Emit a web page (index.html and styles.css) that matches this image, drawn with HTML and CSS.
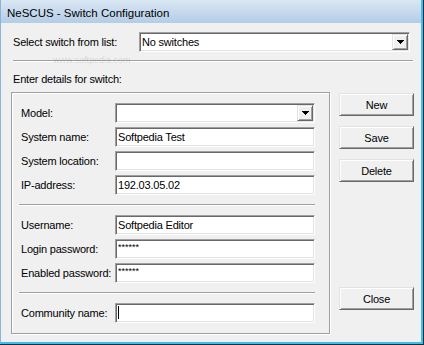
FILE: index.html
```html
<!DOCTYPE html>
<html lang="en">
<head>
    <meta charset="UTF-8">
    <meta name="viewport" content="width=device-width, initial-scale=1.0">
    <title>NeSCUS - Switch Configuration</title>
    <link rel="stylesheet" href="styles.css">
</head>
<body>
    <div class="window">
        <div class="frame">
            <div class="titlebar">NeSCUS - Switch Configuration</div>
            <div class="client">
                <div class="select-row">
                    <span class="label">Select switch from list:</span>
                    <div class="combo">
                        <span class="value">No switches</span>
                        <span class="drop"><svg width="7" height="4" viewBox="0 0 7 4" shape-rendering="crispEdges"><path d="M0 0h7v1H0zM1 1h5v1H1zM2 2h3v1H2zM3 3h1v1H3z" fill="#000"/></svg></span>
                    </div>
                </div>
                <div class="sep top-sep"></div>
                <div class="caption">Enter details for switch:</div>

                <div class="details">
                    <div class="group">
                        <div class="row">
                            <label class="label">Model:</label>
                            <div class="combo">
                                <span class="value"></span>
                                <span class="drop"><svg width="7" height="4" viewBox="0 0 7 4" shape-rendering="crispEdges"><path d="M0 0h7v1H0zM1 1h5v1H1zM2 2h3v1H2zM3 3h1v1H3z" fill="#000"/></svg></span>
                            </div>
                        </div>
                        <div class="row">
                            <label class="label" for="sysName">System name:</label>
                            <input class="field" id="sysName" type="text" value="Softpedia Test">
                        </div>
                        <div class="row">
                            <label class="label" for="sysLocation">System location:</label>
                            <input class="field" id="sysLocation" type="text" value="">
                        </div>
                        <div class="row">
                            <label class="label" for="ipAddress">IP-address:</label>
                            <input class="field" id="ipAddress" type="text" value="192.03.05.02">
                        </div>

                        <div class="sep inner-sep"></div>

                        <div class="row">
                            <label class="label" for="username">Username:</label>
                            <input class="field" id="username" type="text" value="Softpedia Editor">
                        </div>
                        <div class="row">
                            <label class="label" for="loginPass">Login password:</label>
                            <input class="field pass" id="loginPass" type="text" value="******">
                        </div>
                        <div class="row">
                            <label class="label" for="enabledPass">Enabled password:</label>
                            <input class="field pass" id="enabledPass" type="text" value="******">
                        </div>

                        <div class="sep inner-sep"></div>

                        <div class="row">
                            <label class="label">Community name:</label>
                            <div class="field"><span class="caret"></span></div>
                        </div>
                    </div>

                    <div class="buttons">
                        <button type="button" class="button">New</button>
                        <button type="button" class="button">Save</button>
                        <button type="button" class="button">Delete</button>
                        <button type="button" class="button close">Close</button>
                    </div>
                </div>
            </div>
        </div>
        <!-- softpedia watermark -->
        <div class="mark-url">www.softpedia.com</div>
    </div>
</body>
</html>
```

FILE: styles.css
```css
body {
    margin: 0;
    font-family: "Liberation Sans", Arial, sans-serif;
    font-size: 11px;
    letter-spacing: -0.2px;
    color: #000;
}
.window {
    position: relative;
    width: 424px;
    height: 345px;
    box-sizing: border-box;
    border-right: 1px solid #1d2d3c;
    border-bottom: 1px solid #1d2d3c;
    overflow: hidden;
}
.frame {
    height: 100%;
    box-sizing: border-box;
    display: flex;
    flex-direction: column;
    background: #f0f0f0;
    border-left: 1px solid #8cb4d8;
    border-right: 2px solid #3cbfee;
    border-bottom: 2px solid #3cbfee;
}
.titlebar {
    height: 23px;
    box-sizing: border-box;
    flex: none;
    padding: 3px 0 0 6px;
    line-height: 20px;
    font-size: 11.5px;
    letter-spacing: 0;
    background: linear-gradient(#dae7f4, #b4cce6);
}
.client {
    padding: 9px 7px 0 10px;
}
.label {
    line-height: 20px;
    white-space: nowrap;
}
.select-row {
    display: grid;
    grid-template-columns: 126px 271px;
    height: 20px;
    margin-left: 2px;
}
.sep {
    height: 0;
    border-top: 1px solid #a0a0a0;
    border-bottom: 1px solid #fff;
}
.top-sep {
    width: 400px;
    margin: 8px 0 0 2px;
}
.caption {
    margin: 7px 0 0 2px;
    line-height: 20px;
}
.details {
    display: grid;
    grid-template-columns: 319px 75px;
    column-gap: 9px;
    margin-top: 3px;
}
.group {
    border: 1px solid #a0a0a0;
    box-shadow: inset 1px 1px 0 #fff, 1px 1px 0 #fff;
    padding: 10px 14px 10px 9px;
}
.row {
    display: grid;
    grid-template-columns: 94px 200px;
    height: 20px;
}
.row + .row {
    margin-top: 4px;
}
.inner-sep {
    width: 296px;
    margin: 9px 0 9px -2px;
}
.field, .combo {
    box-sizing: border-box;
    height: 20px;
    margin: 0;
    border: 1px solid;
    border-color: #a0a0a0 #fff #fff #a0a0a0;
    box-shadow: inset 1px 1px 0 #696969, inset -1px -1px 0 #e3e3e3;
    background: #fff;
}
.field {
    width: 200px;
    padding: 0 2px;
    font: inherit;
    letter-spacing: inherit;
    color: #000;
    outline: none;
}
.field.pass {
    font-size: 9px;
    letter-spacing: 0;
    padding-bottom: 4px;
}
.caret {
    display: inline-block;
    width: 1px;
    height: 13px;
    margin-top: 2px;
    background: #000;
}
.combo {
    display: flex;
    align-items: center;
}
.combo .value {
    flex: 1;
    padding-left: 2px;
    line-height: 18px;
}
.drop {
    width: 16px;
    height: 16px;
    margin-right: 1px;
    box-sizing: border-box;
    display: flex;
    align-items: center;
    justify-content: center;
    background: #f0f0f0;
    border: 1px solid;
    border-color: #e3e3e3 #696969 #696969 #e3e3e3;
    box-shadow: inset 1px 1px 0 #fff, inset -1px -1px 0 #a0a0a0;
}
.buttons {
    display: flex;
    flex-direction: column;
    padding: 1px 0 24px;
}
.button {
    width: 75px;
    height: 23px;
    padding: 0;
    box-sizing: border-box;
    font: inherit;
    letter-spacing: inherit;
    color: #000;
    background: #f0f0f0;
    border: 1px solid;
    border-color: #e3e3e3 #696969 #696969 #e3e3e3;
    box-shadow: inset 1px 1px 0 #fff, inset -1px -1px 0 #a0a0a0;
}
.button + .button {
    margin-top: 10px;
}
.button.close {
    margin-top: auto;
}
.mark-url {
    position: absolute;
    left: 53px;
    top: 55px;
    font-size: 9px;
    letter-spacing: 0;
    color: rgba(0, 0, 0, 0.14);
    pointer-events: none;
}
```
